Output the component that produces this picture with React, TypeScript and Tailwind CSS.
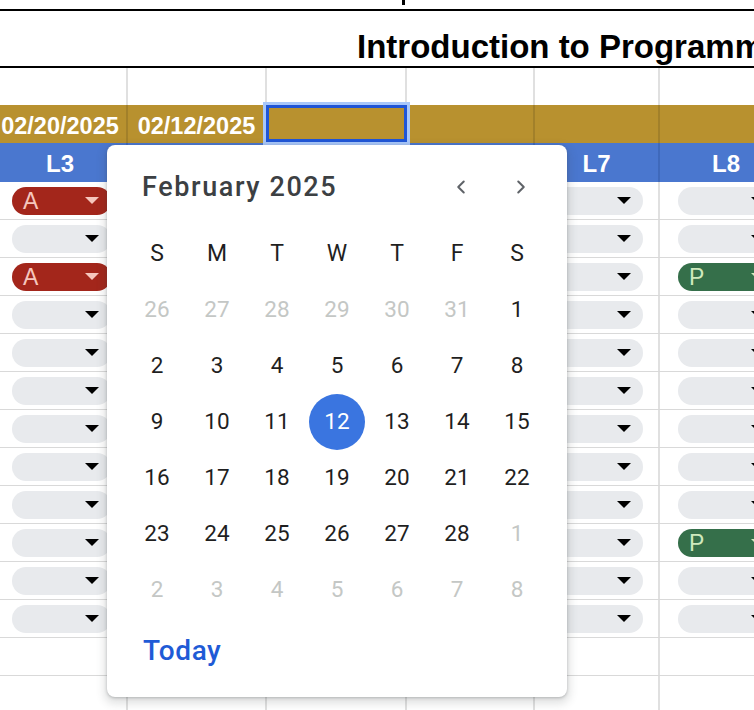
import { ChevronLeft, ChevronRight } from 'lucide-react';

type Mark = '' | 'A' | 'P';

const COLS = [
  { label: 'L3', w: 'w-[134px]' },
  { label: 'L4', w: 'w-[139px]' },
  { label: 'L5', w: 'w-[140px]' },
  { label: 'L6', w: 'w-[128px]' },
  { label: 'L7', w: 'w-[125px]' },
  { label: 'L8', w: 'w-[134px]' },
];

// attendance marks per row, one per column
const ROWS: Mark[][] = [
  ['A', '', '', '', '', ''],
  ['', '', '', '', '', ''],
  ['A', '', '', '', '', 'P'],
  ['', '', '', '', '', ''],
  ['', '', '', '', '', ''],
  ['', '', '', '', '', ''],
  ['', '', '', '', '', ''],
  ['', '', '', '', '', ''],
  ['', '', '', '', '', ''],
  ['', '', '', '', '', 'P'],
  ['', '', '', '', '', ''],
  ['', '', '', '', '', ''],
];

const WEEKS: { d: number; muted?: boolean }[][] = [
  [26, 27, 28, 29, 30, 31].map(d => ({ d, muted: true })).concat([{ d: 1 }]),
  [2, 3, 4, 5, 6, 7, 8].map(d => ({ d })),
  [9, 10, 11, 12, 13, 14, 15].map(d => ({ d })),
  [16, 17, 18, 19, 20, 21, 22].map(d => ({ d })),
  [23, 24, 25, 26, 27, 28].map(d => ({ d })).concat([{ d: 1, muted: true }]),
  [2, 3, 4, 5, 6, 7, 8].map(d => ({ d, muted: true })),
];

function Chip({ mark }: { mark: Mark }) {
  const tone =
    mark === 'A'
      ? 'bg-[#a3261b] text-[#f6c6bd]'
      : mark === 'P'
        ? 'bg-[#356f4a] text-[#cfe9bd]'
        : 'bg-[#e8eaed] text-black';
  const arrow =
    mark === 'A' ? 'border-t-[#f6c6bd]' : mark === 'P' ? 'border-t-[#cfe9bd]' : 'border-t-black';
  return (
    <div className={`flex-1 h-[28px] rounded-full flex items-center justify-between pl-[11px] pr-[12px] ${tone}`}>
      <span className="text-[23px] leading-none pt-[1px]">{mark}</span>
      <span className={`w-0 h-0 border-x-[7px] border-x-transparent border-t-[7px] ${arrow}`} />
    </div>
  );
}

function Calendar() {
  return (
    <div
      className="absolute left-[107px] top-[145px] w-[460px] h-[552px] bg-white rounded-[8px] shadow-[0_1px_3px_rgba(60,64,67,0.3),0_4px_8px_3px_rgba(60,64,67,0.15)] flex flex-col"
      style={{ fontFamily: 'Roboto, "Open Sans", sans-serif' }}
    >
      {/* Month title + nav */}
      <div className="h-[81px] flex items-center pl-[35px] pr-[26px] pt-[3px] shrink-0">
        <span className="flex-1 text-[27px] font-medium text-[#3c4043] tracking-[1.6px]">February 2025</span>
        <div className="flex gap-[20px] text-[#5f6368]">
          <span className="w-[40px] flex justify-center"><ChevronLeft size={22} strokeWidth={2.2} /></span>
          <span className="w-[40px] flex justify-center"><ChevronRight size={22} strokeWidth={2.2} /></span>
        </div>
      </div>

      {/* Day grid */}
      <div className="px-[20px] grid grid-cols-7 auto-rows-[56px] shrink-0">
        {['S', 'M', 'T', 'W', 'T', 'F', 'S'].map((l, i) => (
          <div key={i} className="flex items-center justify-center pt-[1px] text-[23px] text-[#1f1f1f]">{l}</div>
        ))}
        {WEEKS.flat().map((c, i) => {
          const selected = !c.muted && c.d === 12;
          return (
            <div key={i} className="flex items-center justify-center">
              <span
                className={`w-[56px] h-[56px] rounded-full flex items-center justify-center text-[22.5px] ${
                  selected ? 'bg-[#3a75e0] text-white' : c.muted ? 'text-[#c4c7c5]' : 'text-[#1f1f1f]'
                }`}
              >
                {c.d}
              </span>
            </div>
          );
        })}
      </div>

      {/* Today */}
      <div className="h-[62px] flex items-center pl-[36px] pt-[3px] shrink-0">
        <span className="text-[28px] font-medium text-[#1f5bd6] tracking-[0.6px]">Today</span>
      </div>
    </div>
  );
}

export default function App() {
  return (
    <div
      className="relative w-[754px] h-[710px] overflow-hidden bg-white"
      style={{ fontFamily: '"Liberation Sans", Arial, sans-serif' }}
    >
      {/* cut-off row above the title */}
      <div className="h-[11px] border-b-2 border-black relative">
        <span className="absolute left-[402px] top-0 w-[3px] h-[5px] bg-black" />
      </div>

      {/* Title */}
      <div className="h-[57px] border-b-2 border-black flex items-center pl-[357px] pt-[15px] whitespace-nowrap overflow-hidden">
        <span className="text-[33px] font-bold text-black leading-none">Introduction to Programming</span>
      </div>

      <div className="-ml-[6px] w-max">
        {/* Empty row */}
        <div className="flex h-[37px]">
          {COLS.map((c, i) => (
            <div key={i} className={`${c.w} border-r-2 border-[#e0e0e0]`} />
          ))}
        </div>

        {/* Dates row */}
        <div className="flex h-[38px] bg-[#b8912f]">
          {COLS.map((c, i) => (
            <div
              key={i}
              className={`${c.w} relative border-r-2 border-[#a2802a] flex items-center justify-center pt-[6px] text-white font-bold text-[23.5px]`}
            >
              {i === 0 ? '02/20/2025' : i === 1 ? '02/12/2025' : ''}
              {i === 2 && (
                <div className="absolute -left-[4px] -right-[5px] -top-[3px] -bottom-[2px] border-[3px] border-[#a8c7fa]">
                  <div className="w-full h-full border-[3px] border-[#1f55d6]" />
                </div>
              )}
            </div>
          ))}
        </div>

        {/* Lesson header row (L4–L6 sit under the date picker) */}
        <div className="flex h-[39px] bg-[#4a77cf]">
          {COLS.map((c, i) => (
            <div
              key={i}
              className={`${c.w} border-r-2 border-[#3f69bb] flex items-center justify-center pt-[3px] text-white font-bold text-[24px]`}
            >
              {i >= 1 && i <= 3 ? '' : c.label}
            </div>
          ))}
        </div>

        {/* Attendance rows */}
        {ROWS.map((row, r) => (
          <div key={r} className="flex h-[38px] border-b border-[#d9d9d9]">
            {COLS.map((c, i) => (
              <div key={i} className={`${c.w} border-r-2 border-[#e0e0e0] flex items-center pl-[18px] pr-[15px]`}>
                <Chip mark={row[i]} />
              </div>
            ))}
          </div>
        ))}

        {/* Trailing empty rows */}
        {[0, 1].map(r => (
          <div key={r} className="flex h-[38px] border-b border-[#d9d9d9]">
            {COLS.map((c, i) => (
              <div key={i} className={`${c.w} border-r-2 border-[#e0e0e0]`} />
            ))}
          </div>
        ))}
      </div>

      <Calendar />
    </div>
  );
}
